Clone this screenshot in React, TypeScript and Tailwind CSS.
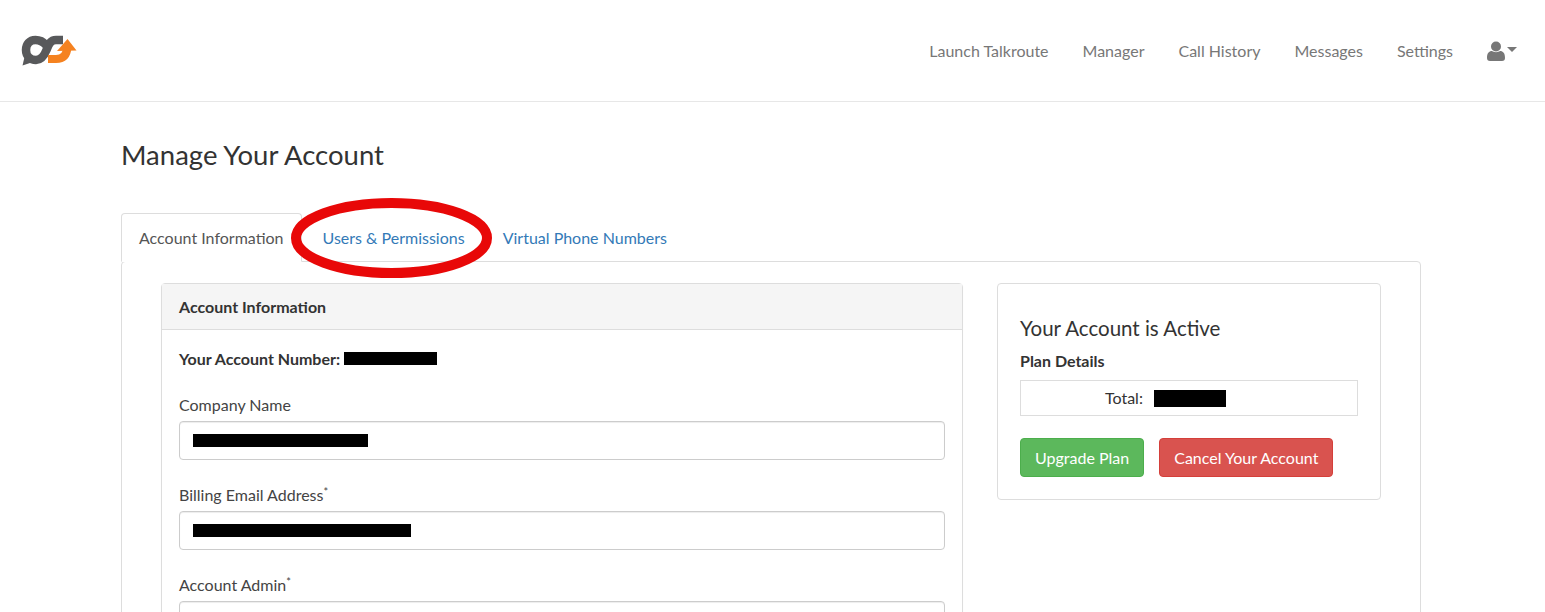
const NAV = ['Launch Talkroute', 'Manager', 'Call History', 'Messages', 'Settings']

function Logo() {
  return (
    <svg width="56" height="34" viewBox="21 33 56 34" fill="none">
      <path d="M46 44 C43 40.500 39 39 35.500 39 C29.500 39 26 43.500 26 49 C26 55 30.500 59 36 59 C42 59 44.500 54 46.500 49 C48.500 44 50 39 56 39 L63 39" stroke="#58595b" strokeWidth="8.500" />
      <path d="M22.500 64.500 L25 54 L33 61 Z" fill="#58595b" />
      <path d="M48 58 L56 58 C63 58 67 54 67.500 46" stroke="#f58220" strokeWidth="8" />
      <path d="M57 50 L67.500 38 L76.500 49.500 Z" fill="#f58220" />
    </svg>
  )
}

function Redacted({ w }: { w: string }) {
  return <span className={`inline-block h-[13px] bg-black ${w}`} />
}

function Field({ label, star, barWidth }: { label: string; star?: boolean; barWidth?: string }) {
  return (
    <div className="mb-[24px]">
      <div className="mb-[6px] h-[21px] leading-[21px] text-[#444]">
        {label}
        {star && <sup className="text-[11px]">*</sup>}
      </div>
      <div className="flex h-[39px] items-center rounded border border-[#ccc] bg-white px-[13px] shadow-[inset_0_1px_1px_rgba(0,0,0,0.075)]">
        {barWidth && <Redacted w={barWidth} />}
      </div>
    </div>
  )
}

export default function App() {
  return (
    <div className="relative h-[612px] overflow-hidden bg-white font-['Lato',sans-serif] text-[16px] text-[#333]">
      <nav className="flex h-[102px] items-center justify-between border-b border-[#e7e7e7] pr-[28px] pl-[21px]">
        <Logo />
        <div className="flex items-center gap-[34px] text-[#777]">
          {NAV.map(n => <a key={n}>{n}</a>)}
          <div className="flex items-center gap-[2px]">
            <svg width="18" height="20" viewBox="0 0 18 20" fill="#777">
              <circle cx="9" cy="5.500" r="5" />
              <path d="M0 17 C0 12 2 10 5 10 C7 11.500 11 11.500 13 10 C16 10 18 12 18 17 C18 19 17 20 15 20 L3 20 C1 20 0 19 0 17 Z" />
            </svg>
            <span className="mt-[-3px] h-0 w-0 border-x-[5px] border-t-[5px] border-x-transparent border-t-[#777]" />
          </div>
        </div>
      </nav>

      <main className="px-[121px] pr-[124px]">
        <h1 className="mt-[36px] mb-[42px] h-[33px] text-[27.500px] leading-[33px] font-normal text-[#333]">Manage Your Account</h1>

        <div className="relative z-10 mb-[-1px] flex h-[49px] items-stretch">
          <div className="flex items-center rounded-t border border-b-white border-[#ddd] bg-white px-[17px] text-[#555]">Account Information</div>
          <a className="flex items-center pr-[19px] pl-[21px] text-[#337ab7]">Users &amp; Permissions</a>
          <a className="flex items-center px-[19px] text-[#337ab7]">Virtual Phone Numbers</a>
        </div>

        <div className="flex h-[400px] items-start gap-[34px] rounded border border-[#ddd] pt-[21px] pr-[39px] pl-[39px]">
          <section className="h-[400px] w-[802px] shrink-0 rounded border border-[#ddd] shadow-[0_1px_1px_rgba(0,0,0,0.05)]">
            <div className="flex h-[46px] items-center border-b border-[#ddd] bg-[#f5f5f5] px-[17px] font-bold">Account Information</div>
            <div className="px-[17px] pt-[18px]">
              <div className="mb-[25px] flex h-[21px] items-center gap-[4px] font-bold">
                Your Account Number: <Redacted w="w-[93px]" />
              </div>
              <Field label="Company Name" barWidth="w-[175px]" />
              <Field label="Billing Email Address" star barWidth="w-[218px]" />
              <Field label="Account Admin" star />
            </div>
          </section>

          <aside className="h-[217px] w-[384px] shrink-0 rounded border border-[#ddd] px-[22px] pt-[29px]">
            <h2 className="h-[30px] text-[20.500px] leading-[30px] font-normal">Your Account is Active</h2>
            <div className="mt-[7px] h-[21px] leading-[21px] font-bold">Plan Details</div>
            <div className="mt-[9px] flex h-[36px] w-[338px] items-center border border-[#ddd]">
              <span className="ml-[84px]">Total:</span>
              <span className="ml-[11px] inline-block h-[17px] w-[72px] bg-black" />
            </div>
            <div className="mt-[22px] flex gap-[15px]">
              <button className="h-[39px] rounded border border-[#4cae4c] bg-[#5cb85c] px-[14px] text-white">Upgrade Plan</button>
              <button className="h-[39px] rounded border border-[#d43f3a] bg-[#d9534f] px-[14px] text-white">Cancel Your Account</button>
            </div>
          </aside>
        </div>
      </main>

      {/* red marker ring drawn over the tabs */}
      <svg className="absolute top-[197px] left-[290px] z-20" width="204" height="82" viewBox="0 0 204 82" fill="none">
        <ellipse cx="101.500" cy="41" rx="95.500" ry="35" stroke="#e80808" strokeWidth="10" />
      </svg>
    </div>
  )
}
